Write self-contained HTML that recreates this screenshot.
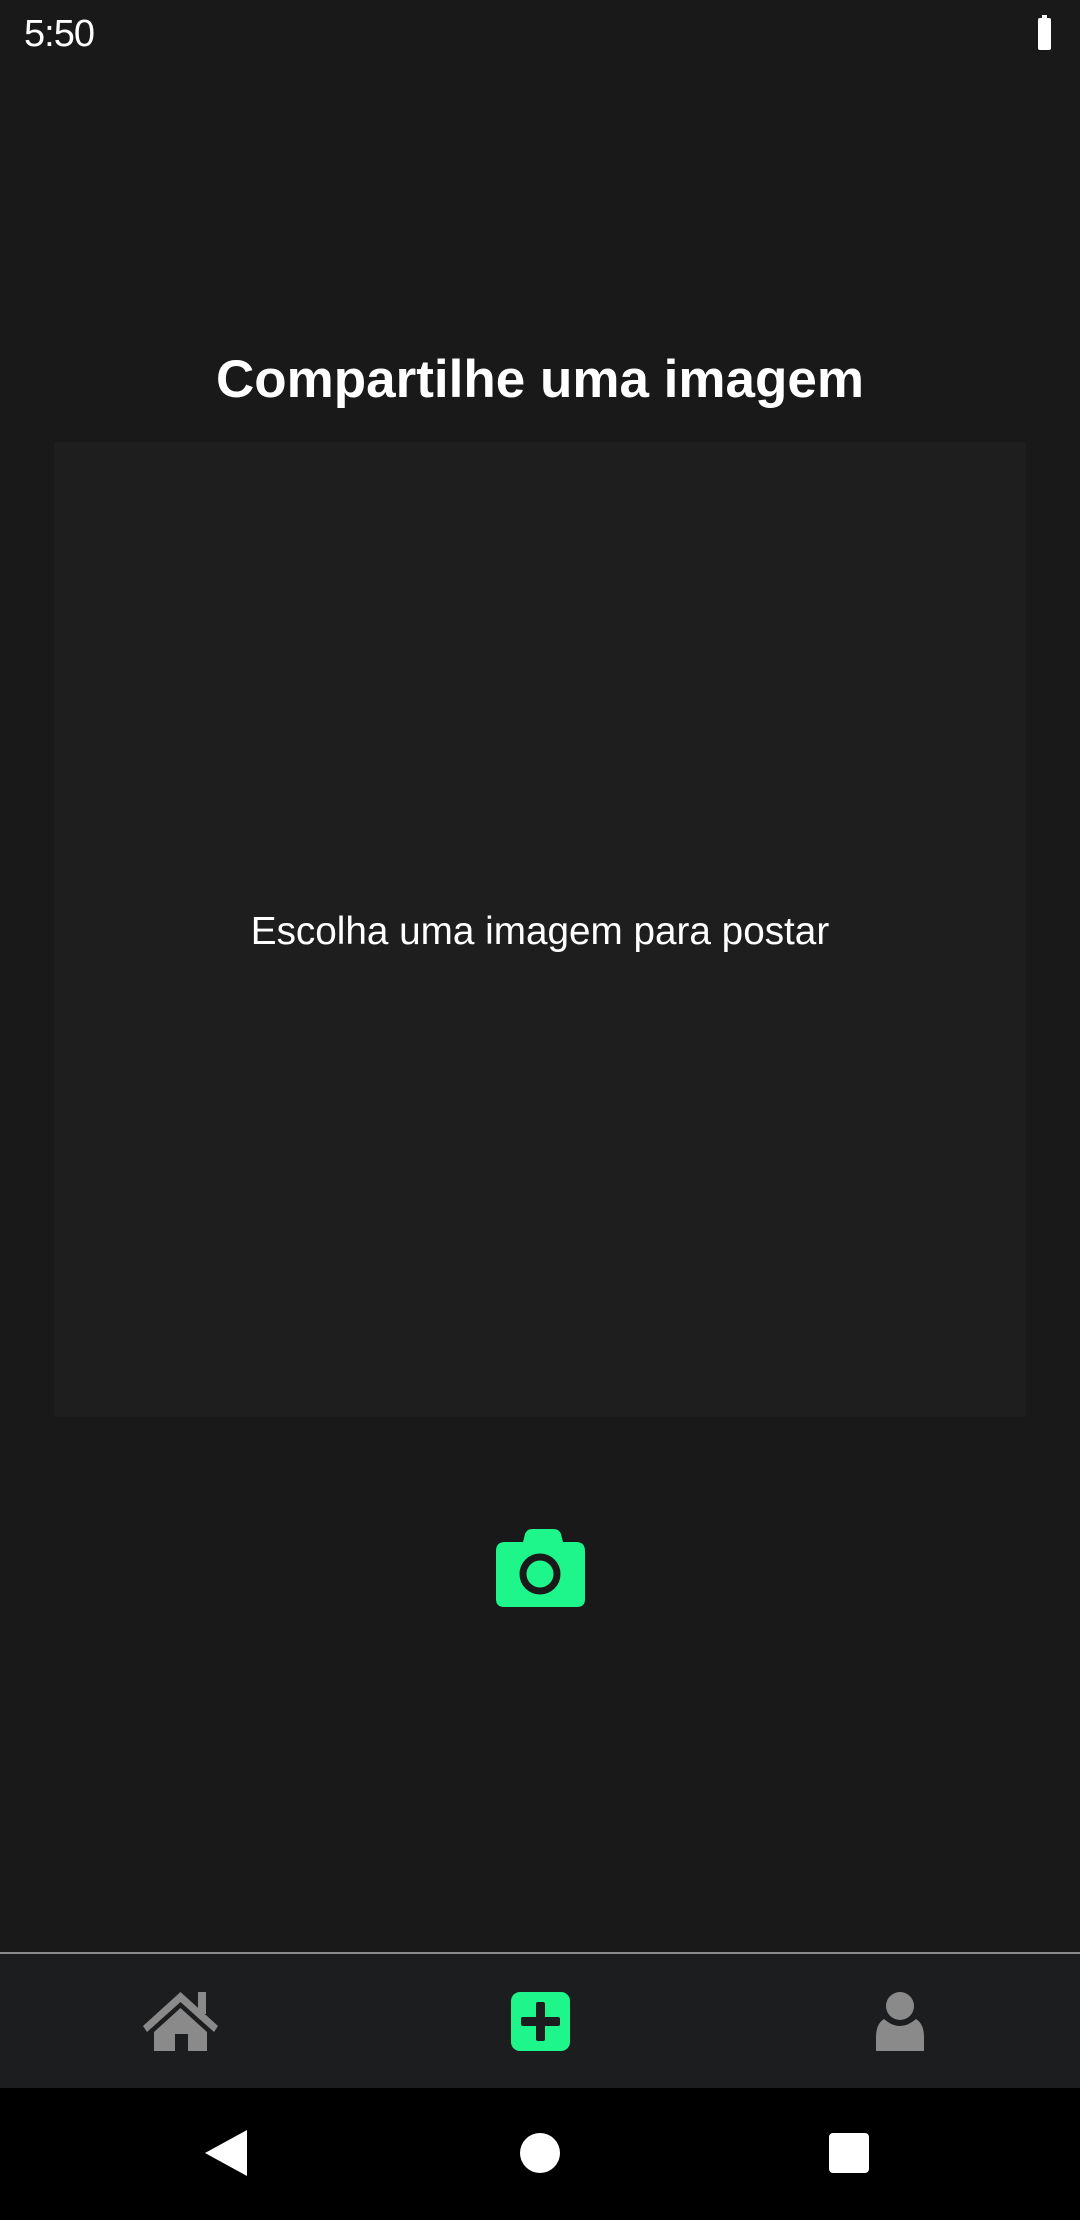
<!DOCTYPE html>
<html><head><meta charset="utf-8"><style>
*{margin:0;padding:0;box-sizing:border-box}
body{width:1080px;height:2220px;background:#19191a;position:relative;overflow:hidden;font-family:"Liberation Sans",Roboto,sans-serif;color:#fff}
.abs{position:absolute}
</style></head><body>
<div class="abs" style="left:24px;top:12px;font-size:38px;line-height:44px;letter-spacing:-1px">5:50</div>
<div class="abs" style="left:1042px;top:15px;width:5px;height:4px;background:#fff"></div>
<div class="abs" style="left:1038px;top:18px;width:13px;height:32px;background:#fff;border-radius:2px"></div>
<div class="abs" style="left:0;width:1080px;top:350px;text-align:center;font-size:53px;font-weight:bold;line-height:60px">Compartilhe uma imagem</div>
<div class="abs" style="left:54px;top:442px;width:972px;height:975px;background:#1f1e1f"></div>
<div class="abs" style="left:0;width:1080px;top:910px;text-align:center;font-size:38.7px;line-height:44px">Escolha uma imagem para postar</div>
<svg class="abs" style="left:496px;top:1529px" width="89" height="78" viewBox="0 0 89 78">
<path d="M27 13 L29 5 Q31 0 36 0 L58 0 Q63 0 65 5 L67 13 L80 13 Q89 13 89 22 L89 70 Q89 78 81 78 L8 78 Q0 78 0 70 L0 22 Q0 13 9 13 Z" fill="#1ef58a"/>
<circle cx="44" cy="45" r="17" fill="none" stroke="#19191a" stroke-width="7"/>
</svg>
<div class="abs" style="left:0;top:1952px;width:1080px;height:2px;background:#8a8a8a"></div>
<div class="abs" style="left:0;top:1954px;width:1080px;height:134px;background:#1c1d1f"></div>
<svg class="abs" style="left:143px;top:1992px" width="75" height="59" viewBox="0 0 75 59">
<rect x="55" y="0" width="8" height="22" fill="#8a8a8a"/>
<path d="M37.5 0 L75 34 L71 40 L37.5 10 L4 40 L0 34 Z" fill="#8a8a8a"/>
<path d="M37.5 16 L64 40 L64 59 L45 59 L45 42 L32 42 L32 59 L11 59 L11 40 Z" fill="#8a8a8a"/>
</svg>
<svg class="abs" style="left:511px;top:1992px" width="59" height="59" viewBox="0 0 59 59">
<rect width="59" height="59" rx="9" fill="#1ef58a"/>
<rect x="25" y="10" width="9" height="39" rx="2" fill="#1c1d1f"/>
<rect x="10" y="25" width="39" height="9" rx="2" fill="#1c1d1f"/>
</svg>
<svg class="abs" style="left:876px;top:1992px" width="48" height="59" viewBox="0 0 48 59">
<ellipse cx="24" cy="14" rx="14" ry="14" fill="#8a8a8a"/>
<path d="M8 27 Q16 34 24 34 Q32 34 40 27 Q48 32 48 45 L48 59 L0 59 L0 45 Q0 32 8 27 Z" fill="#8a8a8a"/>
</svg>
<div class="abs" style="left:0;top:2088px;width:1080px;height:132px;background:#000"></div>
<svg class="abs" style="left:205px;top:2130px" width="42" height="46" viewBox="0 0 42 46"><path d="M42 0 L42 46 L0 23 Z" fill="#fff"/></svg>
<div class="abs" style="left:520px;top:2133px;width:40px;height:40px;border-radius:50%;background:#fff"></div>
<div class="abs" style="left:829px;top:2133px;width:40px;height:40px;border-radius:4px;background:#fff"></div>
</body></html>
